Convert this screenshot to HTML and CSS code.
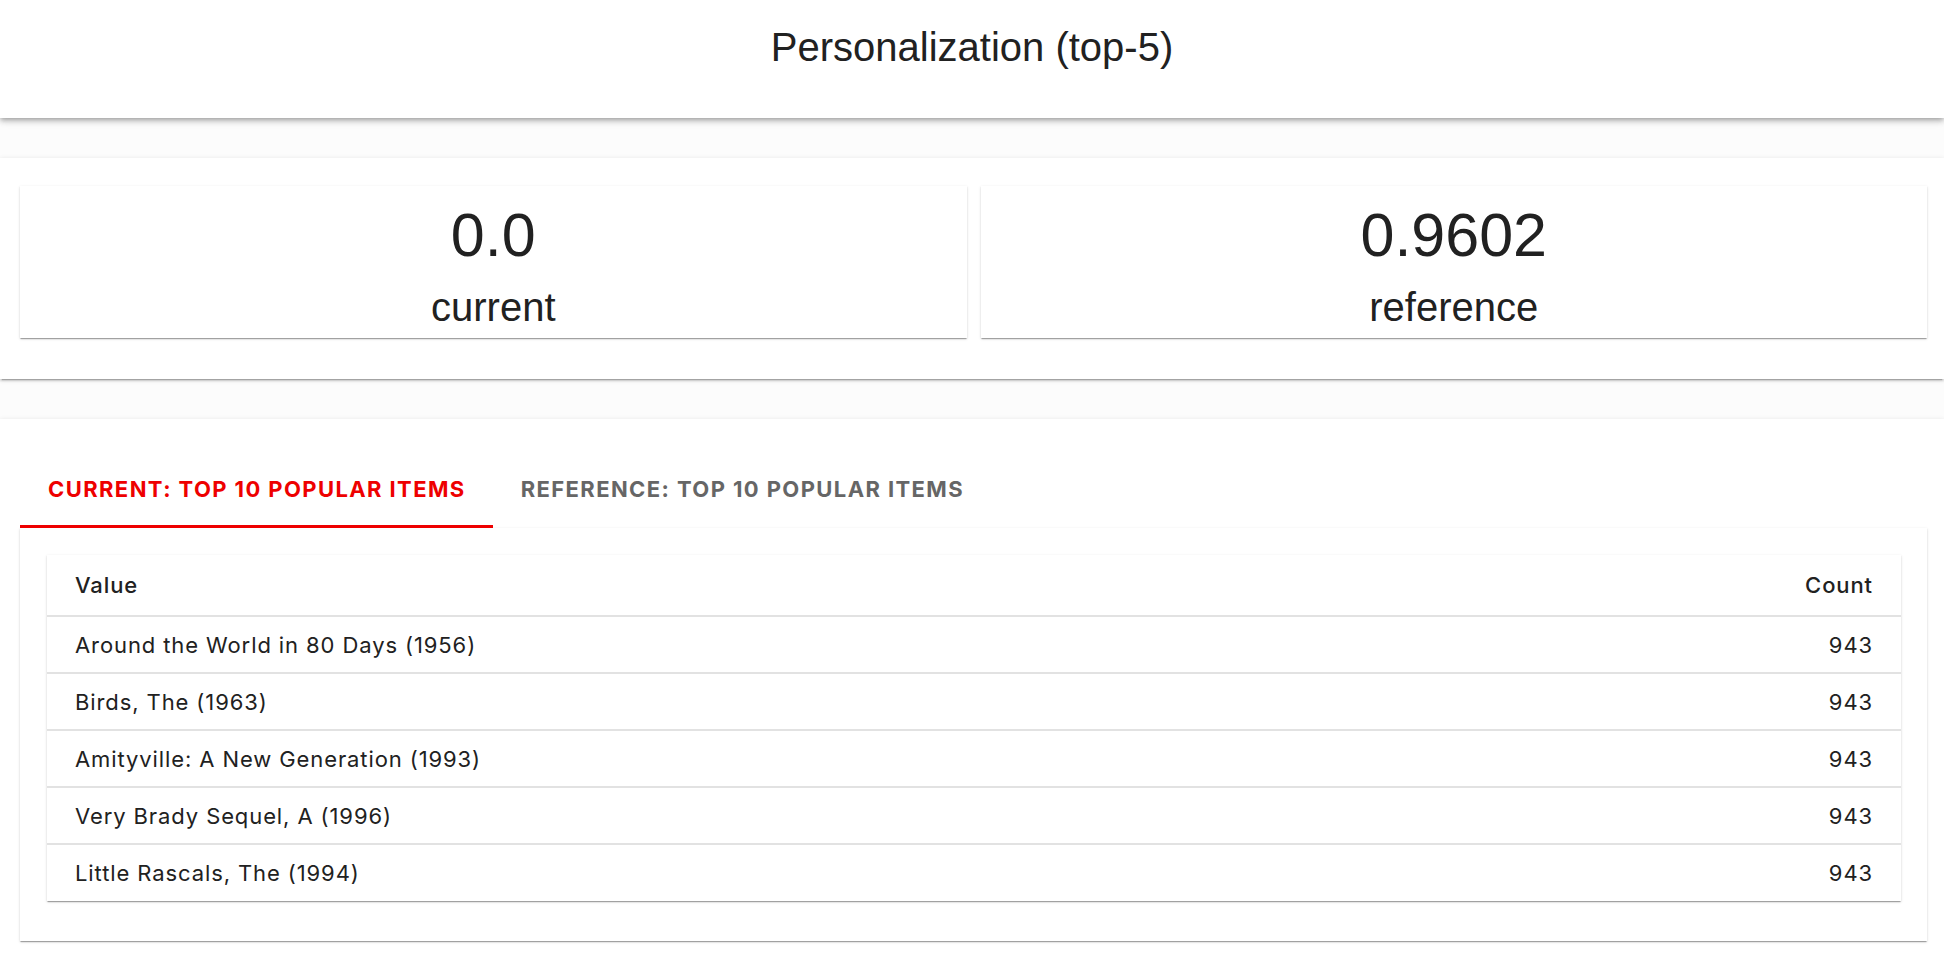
FILE: index.html
```html
<!DOCTYPE html>
<html lang="en">
<head>
<meta charset="utf-8">
<title>Personalization (top-5)</title>
<link rel="stylesheet" href="styles.css">
</head>
<body>
<header class="header">
  <h1 class="title">Personalization (top-5)</h1>
</header>

<section class="panel metrics">
  <div class="card">
    <div class="card-value">0.0</div>
    <div class="card-label">current</div>
  </div>
  <div class="card">
    <div class="card-value">0.9602</div>
    <div class="card-label">reference</div>
  </div>
</section>

<section class="panel tabs-panel">
  <div class="tabs">
    <div class="tab tab-active">CURRENT: TOP 10 POPULAR ITEMS</div>
    <div class="tab">REFERENCE: TOP 10 POPULAR ITEMS</div>
  </div>
  <div class="tab-content">
    <table class="table">
      <thead>
        <tr><th class="col-value">Value</th><th class="col-count">Count</th></tr>
      </thead>
      <tbody>
        <tr><td class="col-value">Around the World in 80 Days (1956)</td><td class="col-count">943</td></tr>
        <tr><td class="col-value">Birds, The (1963)</td><td class="col-count">943</td></tr>
        <tr><td class="col-value">Amityville: A New Generation (1993)</td><td class="col-count">943</td></tr>
        <tr><td class="col-value">Very Brady Sequel, A (1996)</td><td class="col-count">943</td></tr>
        <tr><td class="col-value">Little Rascals, The (1994)</td><td class="col-count">943</td></tr>
      </tbody>
    </table>
  </div>
</section>
</body>
</html>
```
FILE: styles.css
```css
* { box-sizing: border-box; }

html, body {
  margin: 0;
  padding: 0;
}

body {
  background: #fcfcfc;
  color: rgba(0, 0, 0, 0.87);
  font-family: "Liberation Sans", Arial, sans-serif;
  height: 958px;
  overflow: hidden;
}

.header {
  height: 118px;
  background: #fff;
  padding-top: 24px;
  box-shadow: 0 2px 4px -1px rgba(0,0,0,0.2), 0 4px 5px 0 rgba(0,0,0,0.14), 0 1px 10px 0 rgba(0,0,0,0.12);
  position: relative;
  z-index: 2;
}

.title {
  margin: 0;
  text-align: center;
  font-family: "Liberation Sans", Arial, sans-serif;
  font-weight: 400;
  font-size: 40px;
  line-height: 46px;
  color: #212121;
}

.panel {
  background: #fff;
  box-shadow: 0 3px 1px -2px rgba(0,0,0,0.2), 0 2px 2px 0 rgba(0,0,0,0.14), 0 1px 5px 0 rgba(0,0,0,0.12);
}

.metrics {
  margin-top: 40px;
  height: 221px;
  padding: 28px 17px 0 20px;
  display: grid;
  grid-template-columns: 1fr 1fr;
  column-gap: 14px;
  align-items: start;
}

.card {
  height: 152px;
  background: #fff;
  box-shadow: 0 2px 1px -1px rgba(0,0,0,0.2), 0 1px 1px 0 rgba(0,0,0,0.14), 0 1px 3px 0 rgba(0,0,0,0.12);
  display: flex;
  flex-direction: column;
  align-items: center;
  padding-top: 14px;
  color: #212121;
}

.card-value {
  font-size: 61px;
  line-height: 70px;
}

.card-label {
  margin-top: 12px;
  font-size: 40px;
  line-height: 50px;
}

.tabs-panel {
  margin-top: 40px;
  padding: 28px 17px 40px 20px;
  min-height: 560px;
}

.tabs {
  display: flex;
  align-items: flex-end;
  height: 81px;
}

.tab {
  font-family: Inter, "Noto Sans", sans-serif;
  font-weight: 700;
  font-size: 22px;
  letter-spacing: 1.4px;
  line-height: 24px;
  padding: 33px 27px 24px 28px;
  color: #666;
  white-space: nowrap;
  border-bottom: 3px solid transparent;
}

.tab-active {
  color: #ee0000;
  border-bottom-color: #ee0000;
}

.tab-content {
  background: #fff;
  padding: 27px 26px 40px 27px;
  box-shadow: 0 2px 1px -1px rgba(0,0,0,0.2), 0 1px 1px 0 rgba(0,0,0,0.14), 0 1px 3px 0 rgba(0,0,0,0.12);
}

.table {
  width: 100%;
  border-collapse: collapse;
  font-family: Inter, "Noto Sans", sans-serif;
  font-size: 22px;
  letter-spacing: 0.9px;
  color: #212121;
  box-shadow: 0 2px 1px -1px rgba(0,0,0,0.2), 0 1px 1px 0 rgba(0,0,0,0.14), 0 1px 3px 0 rgba(0,0,0,0.12);
}

.table th,
.table td {
  padding: 0 28px;
  border-bottom: 2px solid #e2e2e2;
  text-align: left;
}

.table th {
  height: 61px;
  font-weight: 500;
}

.table td {
  height: 57px;
  font-weight: 400;
}

.table tbody tr:last-child td {
  border-bottom: none;
}

.table .col-count {
  text-align: right;
}
```
